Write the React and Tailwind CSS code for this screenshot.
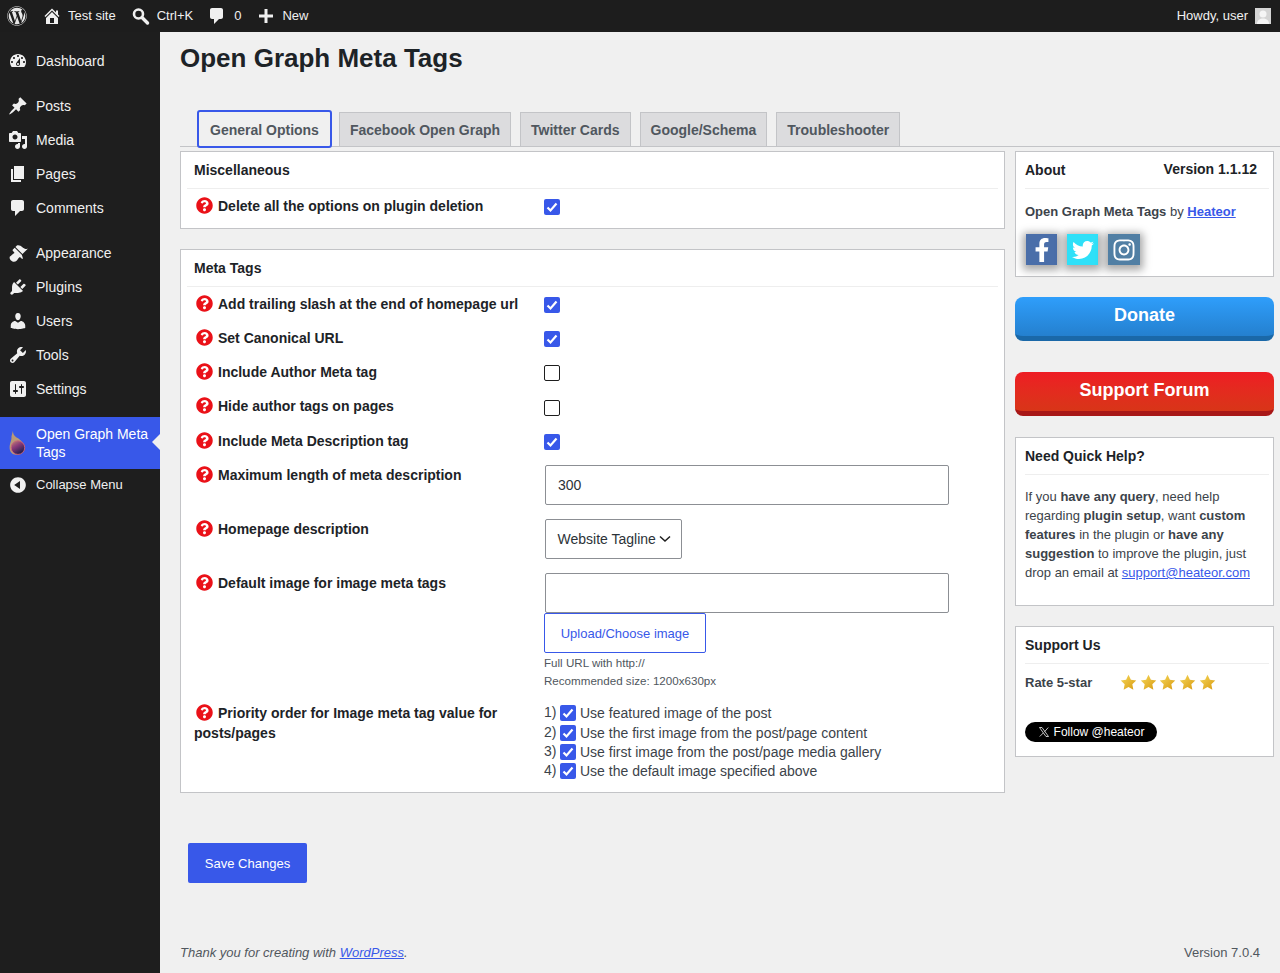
import React from "react";
import { FaWordpress, FaQuestionCircle, FaFacebookF, FaTwitter, FaInstagram } from "react-icons/fa";

const P = {
  dash: "M3.76 16h12.48c1.1-1.37 1.76-3.11 1.76-5 0-4.42-3.58-8-8-8s-8 3.58-8 8c0 1.89.66 3.63 1.76 5zM10 4c.55 0 1 .45 1 1s-.45 1-1 1-1-.45-1-1 .45-1 1-1zM6 6c.55 0 1 .45 1 1s-.45 1-1 1-1-.45-1-1 .45-1 1-1zm8 0c.55 0 1 .45 1 1s-.45 1-1 1-1-.45-1-1 .45-1 1-1zm-5.37 5.55L12 7v6c0 1.1-.9 2-2 2s-2-.9-2-2c0-.57.24-1.08.63-1.45zM4 10c.55 0 1 .45 1 1s-.45 1-1 1-1-.45-1-1 .45-1 1-1zm12 0c.55 0 1 .45 1 1s-.45 1-1 1-1-.45-1-1 .45-1 1-1zm-5 3c0-.55-.45-1-1-1s-1 .45-1 1 .45 1 1 1 1-.45 1-1z",
  post: "M10.44 3.02l1.82-1.82 6.36 6.35-1.83 1.82c-1.05-.68-2.48-.57-3.41.36l-.75.75c-.92.93-1.04 2.35-.35 3.41l-1.83 1.82-2.41-2.41-2.8 2.79c-.42.42-3.38 2.71-3.8 2.29s1.86-3.39 2.28-3.81l2.79-2.79L4.1 9.36l1.83-1.82c1.05.69 2.48.57 3.4-.36l.75-.75c.93-.92 1.05-2.35.36-3.41z",
  media: "M13 11V4c0-.55-.45-1-1-1h-1.67L9 1H5L3.67 3H2c-.55 0-1 .45-1 1v7c0 .55.45 1 1 1h10c.55 0 1-.45 1-1zM7 4.5c1.38 0 2.5 1.12 2.5 2.5S8.38 9.5 7 9.5 4.5 8.38 4.5 7 5.62 4.5 7 4.5zM14 6h5v10.5c0 1.38-1.12 2.5-2.5 2.5S14 17.88 14 16.5s1.12-2.5 2.5-2.5c.17 0 .34.02.5.05V9h-3V6zm-4 8.05V13h2v3.5c0 1.38-1.12 2.5-2.5 2.5S7 17.88 7 16.5 8.12 14 9.5 14c.17 0 .34.02.5.05z",
  page: "M6 15V2h10v13H6zm-1 1h8v2H3V5h2v11z",
  comment: "M5 2h9c1.1 0 2 .9 2 2v7c0 1.1-.9 2-2 2h-2l-5 5v-5H5c-1.1 0-2-.9-2-2V4c0-1.1.9-2 2-2z",
  appearance: "M14.48 11.06L7.41 3.99l1.5-1.5c.5-.56 2.3-.47 3.51.32 1.21.8 1.43 1.28 2.91 2.1 1.18.64 2.45 1.26 4.45.85zm-.71.71L6.7 4.7 4.93 6.47c-.39.39-.39 1.02 0 1.41l1.06 1.06c.39.39.39 1.03 0 1.42-.6.6-1.43 1.11-2.21 1.69-.35.26-.7.53-1.01.84C1.43 13.23.99 15.45 3 17.47c2.01 2.01 4.24 1.57 5.58.23.31-.31.58-.66.85-1.01.57-.78 1.08-1.61 1.69-2.21.39-.39 1.02-.39 1.41 0l1.06 1.06c.39.39 1.02.39 1.41 0z",
  plugin: "M13.11 4.36L9.87 7.6 8 5.73l3.24-3.24c.35-.34 1.05-.2 1.56.32.52.51.66 1.21.31 1.55zm-8 1.77l.91-1.12 9.01 9.01-1.19.84c-.71.71-2.63 1.16-3.82 1.16H6.14L4.9 17.26c-.59.59-1.54.59-2.12 0-.59-.58-.59-1.53 0-2.12l1.24-1.24v-3.88c0-1.13.4-3.19 1.09-3.89zm7.26 3.97l3.24-3.24c.34-.35 1.04-.21 1.55.31.52.51.66 1.21.31 1.55l-3.24 3.25z",
  users: "M10 9.25c-2.27 0-2.73-3.44-2.73-3.44C7 4.02 7.82 2 9.97 2c2.16 0 2.98 2.02 2.71 3.81 0 0-.41 3.44-2.68 3.44zm0 2.57L12.72 10c2.39 0 4.52 2.33 4.52 4.53v2.49s-3.65 1.13-7.24 1.13c-3.65 0-7.24-1.13-7.24-1.13v-2.49c0-2.25 1.94-4.48 4.47-4.48z",
  tools: "M16.68 9.77c-1.34 1.34-3.3 1.67-4.95.99l-5.41 6.52c-.99.99-2.59.99-3.58 0s-.99-2.59 0-3.57l6.52-5.42c-.68-1.65-.35-3.61.99-4.95 1.28-1.28 3.12-1.62 4.72-1.06l-2.89 2.89 2.82 2.82 2.86-2.87c.53 1.58.18 3.39-1.08 4.65zM3.81 16.21c.4.39 1.04.39 1.43 0 .4-.4.4-1.04 0-1.43-.39-.4-1.03-.4-1.43 0-.39.39-.39 1.03 0 1.43z",
  settings: "M18 16V4c0-1.1-.9-2-2-2H4c-1.1 0-2 .9-2 2v12c0 1.1.9 2 2 2h12c1.1 0 2-.9 2-2zM8 11h1c.55 0 1 .45 1 1s-.45 1-1 1H8v1.5c0 .28-.22.5-.5.5s-.5-.22-.5-.5V13H6c-.55 0-1-.45-1-1s.45-1 1-1h1V5.5c0-.28.22-.5.5-.5s.5.22.5.5V11zm5-2h-1c-.55 0-1-.45-1-1s.45-1 1-1h1V5.5c0-.28.22-.5.5-.5s.5.22.5.5V7h1c.55 0 1 .45 1 1s-.45 1-1 1h-1v5.5c0 .28-.22.5-.5.5s-.5-.22-.5-.5V9z",
  collapse: "M10 2.16c4.33 0 7.84 3.51 7.84 7.84s-3.51 7.84-7.84 7.84S2.16 14.33 2.16 10 5.71 2.16 10 2.16zm2 11.72V6.12L6.18 9.97z",
  home: "M16 8.5l1.53 1.53-1.06 1.06L10 4.62l-6.47 6.47-1.06-1.06L10 2.5l4 4v-2h2v4zm-6-2.46l6 5.99V18H4v-5.97zM12 17v-5H8v5h4z",
  plus: "M17 8.5v3h-5.5V17h-3v-5.5H3v-3h5.5V3h3v5.5z",
};

function Dash({ d, size = 20, className = "" }) {
  return (
    <svg viewBox="0 0 20 20" width={size} height={size} fill="currentColor" className={className}>
      <path d={d} />
    </svg>
  );
}

function Flame() {
  return (
    <svg viewBox="0 0 20 28" width="19" height="26">
      <defs>
        <linearGradient id="fl" x1="0" y1="0" x2="0.6" y2="1">
          <stop offset="0" stopColor="#c08a70" />
          <stop offset="0.45" stopColor="#8a3a7a" />
          <stop offset="1" stopColor="#1d1d4a" />
        </linearGradient>
      </defs>
      <path d="M5 1c.5 4 1.5 5 4 7 3 1.500 7 5 8.500 9 .8 3-.5 9-7.500 9.500C4 27 1.500 23 1.500 19 1.500 14 4 11 3.500 7 4 5 4.500 3 5 1z" fill="#b99a78" />
      <circle cx="10.500" cy="19" r="7.300" fill="url(#fl)" stroke="#c8607a" strokeWidth="1" />
    </svg>
  );
}

const menu = [
  { d: P.dash, t: "Dashboard", sep: true },
  { d: P.post, t: "Posts" },
  { d: P.media, t: "Media" },
  { d: P.page, t: "Pages" },
  { d: P.comment, t: "Comments", sep: true },
  { d: P.appearance, t: "Appearance" },
  { d: P.plugin, t: "Plugins" },
  { d: P.users, t: "Users" },
  { d: P.tools, t: "Tools" },
  { d: P.settings, t: "Settings", sep: true },
];

function AdminBar() {
  return (
    <header className="h-8 bg-[#1d1d1d] text-[#f0f0f0] text-[13px] leading-8 flex items-center shrink-0">
      <FaWordpress size={20} className="ml-[7px] text-[#e8e8e8]" />
      <Dash d={P.home} size={20} className="ml-[15px]" />
      <span className="ml-[6px]">Test site</span>
      <svg viewBox="0 0 20 20" width="20" height="20" className="ml-[15px]" fill="none" stroke="currentColor">
        <circle cx="7.500" cy="8" r="4.500" strokeWidth="2.600" />
        <path d="M11 11.500L16.500 17" strokeWidth="3.400" strokeLinecap="round" />
      </svg>
      <span className="ml-[6px]">Ctrl+K</span>
      <Dash d={P.comment} size={20} className="ml-[14px]" />
      <span className="ml-[7px]">0</span>
      <Dash d={P.plus} size={20} className="ml-[15px]" />
      <span className="ml-[6px]">New</span>
      <span className="ml-auto">Howdy, user</span>
      <div className="ml-[7px] mr-[9px] w-4 h-4 bg-[#d4d4d4] flex items-end justify-center overflow-hidden">
        <svg viewBox="0 0 16 16" width="16" height="16" fill="#f5f5f5">
          <circle cx="8" cy="6" r="3.500" />
          <path d="M2 16c0-4 3-5.500 6-5.500s6 1.500 6 5.500z" />
        </svg>
      </div>
    </header>
  );
}

function Sidebar() {
  return (
    <nav className="w-40 shrink-0 bg-[#1e1e1e] text-[#f0f0f0] text-sm pt-3">
      {menu.map((m) => (
        <div key={m.t} className={m.sep ? "mb-[11px]" : ""}>
          <div className="h-[34px] flex items-center pl-2">
            <Dash d={m.d} size={20} />
            <span className="ml-2">{m.t}</span>
          </div>
        </div>
      ))}
      <div className="relative h-[52px] bg-[#3858e9] text-white flex items-center pl-2">
        <Flame />
        <span className="ml-[9px] leading-[18px]">
          Open Graph Meta
          <br />
          Tags
        </span>
        <span className="absolute right-0 top-[17px] w-0 h-0 border-y-[8px] border-y-transparent border-r-[8px] border-r-[#f0f0f0]" />
      </div>
      <div className="h-[32px] flex items-center pl-2 text-[13px] text-[#f0f0f0]">
        <Dash d={P.collapse} size={20} />
        <span className="ml-2">Collapse Menu</span>
      </div>
    </nav>
  );
}

function Check({ on = true, className = "" }) {
  return on ? (
    <span className={"inline-flex w-4 h-4 shrink-0 rounded-[2px] bg-[#3858e9] items-center justify-center " + className}>
      <svg viewBox="0 0 16 16" width="16" height="16" fill="none" stroke="#fff" strokeWidth="2.200">
        <path d="M3.500 8.500l3 3 6-7" />
      </svg>
    </span>
  ) : (
    <span className={"inline-block w-4 h-4 shrink-0 rounded-[2px] bg-white border border-[#1e1e1e] " + className} />
  );
}

function Row({ label, className = "", children }) {
  return (
    <div className={"flex pt-[7px] " + className}>
      <div className="w-[349px] shrink-0 pl-[13px] text-sm leading-5 font-bold text-[#1d2327]">
        <FaQuestionCircle size={17} className="inline-block text-[#ea1118] align-[-3px] ml-[2px] mr-[5px]" />
        {label}
      </div>
      <div className="ml-[14px] flex-1">{children}</div>
    </div>
  );
}

function CheckRow({ label, on = true, h = "h-[34px]", check = "mt-[3px]" }) {
  return (
    <Row label={label} className={h}>
      <Check on={on} className={check} />
    </Row>
  );
}

function Panel({ title, children, className = "" }) {
  return (
    <section className={"bg-white border border-[#c3c4c7] " + className}>
      <div className="mx-[6px] h-[37px] pb-px border-b border-[#eeeeee] pl-[7px] flex items-center text-sm font-bold text-[#1d2327]">
        {title}
      </div>
      {children}
    </section>
  );
}

const tabs = ["Facebook Open Graph", "Twitter Cards", "Google/Schema", "Troubleshooter"];

function Tabs() {
  return (
    <div className="mt-[36px] h-[37px] border-b border-[#c3c4c7] pl-[17px] flex items-start gap-[9px]">
      <div className="h-[38px] shrink-0 pt-px -mr-[2px] px-[11px] flex items-center bg-[#f0f0f0] border-2 border-[#3858e9] rounded-[3px] text-sm font-bold text-[#50575e] relative z-10">
        General Options
      </div>
      {tabs.map((t) => (
        <div
          key={t}
          className="mt-[2px] h-[34px] pt-px px-[10px] flex items-center bg-[#dcdcde] border border-b-0 border-[#c3c4c7] text-sm font-bold text-[#50575e]"
        >
          {t}
        </div>
      ))}
    </div>
  );
}

function Stars() {
  return (
    <div className="ml-[28px] flex gap-[2.700px]">
      {[0, 1, 2, 3, 4].map((i) => (
        <svg key={i} viewBox="0 0 20 20" width="17" height="17">
          <defs>
            <linearGradient id={"s" + i} x1="0" y1="0" x2="1" y2="1">
              <stop offset="0" stopColor="#f6d85a" />
              <stop offset="1" stopColor="#d89a10" />
            </linearGradient>
          </defs>
          <path d="M10 1l2.800 5.900 6.300.8-4.600 4.400 1.200 6.400L10 15.400l-5.700 3.100 1.200-6.400L.9 7.700l6.300-.8z" fill={"url(#s" + i + ")"} />
        </svg>
      ))}
    </div>
  );
}

function Social({ bg, children, w = "w-[31px]" }) {
  return (
    <div className={"h-[31px] flex items-center justify-center text-white shadow-[0_2px_8px_3px_rgba(0,0,0,0.35)] " + w + " " + bg}>
      {children}
    </div>
  );
}

function Card({ title, children, className = "" }) {
  return (
    <section className={"bg-white border border-[#c3c4c7] pl-[9px] pr-1 " + className}>
      <div className="h-[37px] pb-px border-b border-[#eeeeee] flex items-center text-sm font-bold text-[#1d2327]">
        {title}
      </div>
      {children}
    </section>
  );
}

function BigButton({ bg, children }) {
  return (
    <div className={"h-[44px] rounded-lg text-white text-lg font-bold text-center leading-[36px] border-b-[5px] " + bg}>
      {children}
    </div>
  );
}

function Right() {
  return (
    <aside className="w-[259px] ml-[10px] shrink-0 text-[13px] text-[#3c434a]">
      <Card
        className="h-[126px]"
        title={
          <div className="flex w-full">
            <span>About</span>
            <span className="ml-auto mr-[12px] -mt-[1px]">Version 1.1.12</span>
          </div>
        }
      >
        <div className="pt-[13px] leading-5">
          <b>Open Graph Meta Tags</b> by <a className="font-bold text-[#3858e9] underline">Heateor</a>
        </div>
        <div className="mt-[12px] ml-[1px] flex gap-[10px]">
          <Social bg="bg-[#4a6ea9]">
            <FaFacebookF size={24} />
          </Social>
          <Social bg="bg-[#2fe0f8]">
            <FaTwitter size={22} />
          </Social>
          <Social bg="bg-[#517fa4]" w="w-[32px]">
            <FaInstagram size={24} />
          </Social>
        </div>
      </Card>
      <div className="mt-5">
        <BigButton bg="bg-gradient-to-b from-[#2f9efb] to-[#2480cf] border-b-[#1a68a8]">Donate</BigButton>
      </div>
      <div className="mt-[31px]">
        <BigButton bg="bg-gradient-to-b from-[#ee1c24] to-[#d83518] border-b-[#a81717]">Support Forum</BigButton>
      </div>
      <Card title="Need Quick Help?" className="mt-[21px] h-[169px]">
        <p className="pt-[12px] leading-[19px]">
          If you <b>have any query</b>, need help regarding <b>plugin setup</b>, want <b>custom features</b> in the plugin or{" "}
          <b>have any suggestion</b> to improve the plugin, just drop an email at{" "}
          <a className="text-[#3858e9] underline">support@heateor.com</a>
        </p>
      </Card>
      <Card title="Support Us" className="mt-5 h-[131px]">
        <div className="flex items-center mt-[9px]">
          <b className="w-[67px] whitespace-nowrap">Rate 5-star</b>
          <Stars />
        </div>
        <div className="mt-[29px] w-[132px] h-5 rounded-full bg-black text-white text-xs flex items-center justify-center gap-[4px]">
          <svg viewBox="0 0 24 24" width="12" height="12" fill="none" stroke="#fff" strokeWidth="1.500">
            <path d="M3 3l13 18h5L8 3zM20.500 3L13 11.500M11 13.500L3.500 21" />
          </svg>
          Follow @heateor
        </div>
      </Card>
    </aside>
  );
}

function Left() {
  const priorities = [
    "Use featured image of the post",
    "Use the first image from the post/page content",
    "Use first image from the post/page media gallery",
    "Use the default image specified above",
  ];
  return (
    <div className="w-[825px] shrink-0">
      <Panel title="Miscellaneous" className="h-[78px]">
        <CheckRow label="Delete all the options on plugin deletion" />
      </Panel>
      <Panel title="Meta Tags" className="mt-5 h-[544px]">
        <CheckRow label="Add trailing slash at the end of homepage url" />
        <CheckRow label="Set Canonical URL" />
        <CheckRow label="Include Author Meta tag" on={false} />
        <CheckRow label="Hide author tags on pages" on={false} h="h-[35px]" check="mt-[4px]" />
        <CheckRow label="Include Meta Description tag" h="h-[34.250px]" />
        <Row label="Maximum length of meta description" className="h-[54px]">
          <input
            readOnly
            value="300"
            className="ml-px w-[404px] h-10 px-3 text-sm text-[#2c3338] bg-white border border-[#8c8f94] rounded-[2px] outline-none"
          />
        </Row>
        <Row label="Homepage description" className="h-[54px]">
          <div className="ml-px w-[137px] h-10 pl-[11.500px] flex items-center text-sm text-[#2c3338] bg-white border border-[#8c8f94] rounded-[2px]">
            Website Tagline
            <svg viewBox="0 0 12 8" width="12" height="8" fill="none" stroke="#1e1e1e" strokeWidth="1.500" className="ml-[3.500px]">
              <path d="M1 1.500l5 4.500 5-4.500" />
            </svg>
          </div>
        </Row>
        <Row label="Default image for image meta tags" className="h-[130px]">
          <input readOnly className="block ml-px w-[404px] h-10 bg-white border border-[#8c8f94] rounded-[2px] outline-none" />
          <div className="w-[162px] h-10 flex items-center justify-center text-[13px] text-[#3858e9] border border-[#3858e9] rounded-[2px]">
            Upload/Choose image
          </div>
          <div className="text-[11.600px] leading-[18px] text-[#50575e] mt-[1px]">
            Full URL with http://
            <br />
            Recommended size: 1200x630px
          </div>
        </Row>
        <Row label="Priority order for Image meta tag value for posts/pages">
          <div className="mt-[1px]">
            {priorities.map((t, i) => (
              <div key={t} className="h-[19.300px] flex items-start text-sm leading-[19px] text-[#3c434a]">
                <span className="w-[16px] -mt-[1px]">{i + 1})</span>
                <Check className="mt-[1px]" />
                <span className="ml-1">{t}</span>
              </div>
            ))}
          </div>
        </Row>
      </Panel>
      <div className="mt-[50px] ml-2 w-[119px] h-10 pt-px bg-[#3858e9] text-white text-[13px] flex items-center justify-center rounded-[2px]">
        Save Changes
      </div>
    </div>
  );
}

export default function App() {
  return (
    <div className="min-h-[973px] h-[973px] flex flex-col bg-[#f0f0f0] font-['Liberation_Sans',Arial,sans-serif]">
      <AdminBar />
      <div className="flex flex-1 min-h-0">
        <Sidebar />
        <main className="flex-1 flex flex-col min-w-0">
          <h1 className="ml-5 pt-[10px] text-[26px] leading-[32px] font-bold text-[#1d2327]">Open Graph Meta Tags</h1>
          <div className="ml-5">
            <Tabs />
          </div>
          <div className="ml-5 mt-[4px] flex">
            <Left />
            <Right />
          </div>
          <footer className="mt-auto ml-5 mr-5 h-[30px] flex justify-between text-[13px] text-[#50575e]">
            <span>
              <i>
                Thank you for creating with <a className="text-[#3858e9] underline">WordPress</a>.
              </i>
            </span>
            <span>Version 7.0.4</span>
          </footer>
        </main>
      </div>
    </div>
  );
}
